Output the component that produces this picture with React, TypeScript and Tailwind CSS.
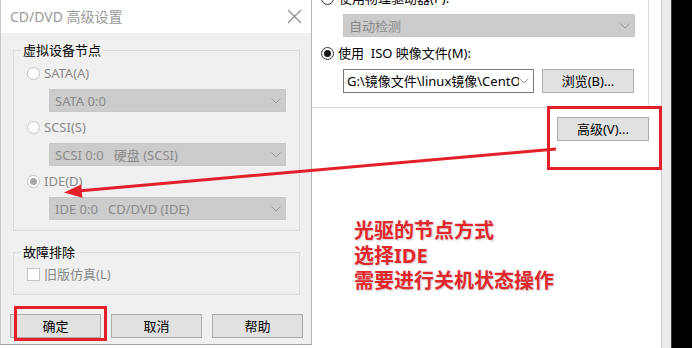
import React from "react";

const Chevron = () => (
  <svg width="10" height="6" viewBox="0 0 10 6" className="shrink-0">
    <polyline points="0.5,0.5 5,5 9.5,0.5" fill="none" stroke="#9a9a9a" strokeWidth="1" />
  </svg>
);

const Radio = ({ checked = false, disabled = false }: { checked?: boolean; disabled?: boolean }) => (
  <span
    className={
      disabled
        ? "w-[13px] h-[13px] shrink-0 rounded-full border border-[#c4c4c4] bg-white flex items-center justify-center"
        : "w-[13px] h-[13px] shrink-0 rounded-full border border-[#333] bg-white flex items-center justify-center"
    }
  >
    {checked && (
      <span className={disabled ? "w-[7px] h-[7px] rounded-full bg-[#a8a8a8]" : "w-[7px] h-[7px] rounded-full bg-[#1a1a1a]"} />
    )}
  </span>
);

const DisabledSelect = ({ text, className = "" }: { text: string; className?: string }) => (
  <div className={"h-[23px] bg-[#cccccc] border border-[#c8c8c8] flex items-center justify-between pl-[5px] pr-[4px] text-[#8a8a8a] whitespace-pre " + className}>
    <span>{text}</span>
    <Chevron />
  </div>
);

const WinButton = ({ label, className = "" }: { label: string; className?: string }) => (
  <div className={"h-[24px] bg-[#e1e1e1] border border-[#adadad] flex items-center justify-center text-black " + className}>
    {label}
  </div>
);

export default function App() {
  return (
    <div className="relative w-[692px] h-[348px] overflow-hidden flex bg-black text-[13px] leading-[16px] [font-family:'Noto_Sans','Noto_Sans_CJK_SC',sans-serif]">
      {/* CD/DVD 高级设置 dialog */}
      <div className="w-[312px] shrink-0 bg-white flex flex-col">
        <div className="h-[345px] bg-[#f0f0f0] border-l border-r border-b border-l-[#c8c8c8] border-r-[#b4b4b4] border-b-[#a8a8a8] flex flex-col">
          <div className="h-[33px] shrink-0 bg-white flex items-center justify-between pl-[9px] pr-[9px]">
            <span className="text-[14px] text-[#9a9a9a]">CD/DVD 高级设置</span>
            <svg width="15" height="15" viewBox="0 0 15 15">
              <path d="M1 1 L14 14 M14 1 L1 14" stroke="#8c8c8c" strokeWidth="1.1" />
            </svg>
          </div>

          <fieldset className="ml-[12px] mt-[9px] w-[287px] border border-[#dcdcdc] pl-[13px] pr-[13px] pt-[7px] pb-[10px]">
            <legend className="-ml-[6px] px-[2px] text-black">虚拟设备节点</legend>
            <div className="flex items-center gap-[4px] h-[16px] text-[#8a8a8a]">
              <Radio disabled />
              <span>SATA(A)</span>
            </div>
            <DisabledSelect text="SATA 0:0" className="ml-[22px] mt-[8px]" />
            <div className="flex items-center gap-[4px] h-[16px] mt-[7px] text-[#8a8a8a]">
              <Radio disabled />
              <span>SCSI(S)</span>
            </div>
            <DisabledSelect text="SCSI 0:0   硬盘 (SCSI)" className="ml-[22px] mt-[8px]" />
            <div className="flex items-center gap-[4px] h-[16px] mt-[7px] text-[#8a8a8a]">
              <Radio disabled checked />
              <span>IDE(D)</span>
            </div>
            <DisabledSelect text="IDE 0:0   CD/DVD (IDE)" className="ml-[22px] mt-[8px]" />
          </fieldset>

          <fieldset className="ml-[12px] mt-[13px] w-[287px] border border-[#dcdcdc] pl-[13px] pr-[13px] pt-[6px] pb-[12px]">
            <legend className="-ml-[6px] px-[2px] text-black">故障排除</legend>
            <div className="flex items-center gap-[4px] h-[16px] text-[#8a8a8a]">
              <span className="w-[13px] h-[13px] border border-[#c4c4c4] bg-white" />
              <span>旧版仿真(L)</span>
            </div>
          </fieldset>

          <div className="flex gap-[10px] pl-[9px] mt-[19px]">
            <WinButton label="确定" className="w-[91px]" />
            <WinButton label="取消" className="w-[91px]" />
            <WinButton label="帮助" className="w-[91px]" />
          </div>
        </div>
      </div>

      {/* main settings window behind */}
      <div className="w-[349px] shrink-0 bg-white flex flex-col">
        <div className="w-[337px] h-[108px] border-r border-b border-[#dcdcdc] flex flex-col">
          <div className="flex items-center gap-[5px] h-[16px] -mt-[10px] pl-[9px] text-black">
            <Radio />
            <span>使用物理驱动器(P):</span>
          </div>
          <DisabledSelect text="自动检测" className="ml-[31px] mt-[8px] w-[292px]" />
          <div className="flex items-center gap-[4px] h-[16px] mt-[8px] pl-[9px] text-black">
            <Radio checked />
            <span className="whitespace-pre">使用  ISO 映像文件(M):</span>
          </div>
          <div className="flex items-center mt-[8px] ml-[31px]">
            <div className="w-[191px] h-[24px] bg-white border border-[#7a7a7a] flex items-center justify-between pl-[3px] pr-[4px] overflow-hidden">
              <span className="whitespace-nowrap overflow-hidden w-[172px]">G:\镜像文件\linux镜像\CentOS</span>
              <Chevron />
            </div>
            <WinButton label="浏览(B)..." className="w-[92px] ml-[8px]" />
          </div>
        </div>
        <div className="flex justify-end pr-[12px] mt-[9px]">
          <WinButton label="高级(V)..." className="w-[92px]" />
        </div>
        <div className="ml-[42px] mt-[77px] text-[20px] leading-[25px] font-bold text-[#e3262c] [text-shadow:1px_1px_2px_#c8c8c8]">
          <div>光驱的节点方式</div>
          <div>选择IDE</div>
          <div>需要进行关机状态操作</div>
        </div>
      </div>

      {/* window edge strip */}
      <div className="w-[11px] shrink-0 bg-[#ececec] border-l border-r border-l-[#d0d0d0] border-r-[#3a3a3a]" />
      <div className="flex-1 bg-black" />

      {/* annotations */}
      <svg className="absolute left-0 top-0 pointer-events-none" width="692" height="348" viewBox="0 0 692 348">
        <rect x="548.5" y="107.5" width="112" height="61" fill="none" stroke="#e3202a" strokeWidth="3" />
        <rect x="15.5" y="307.5" width="90" height="32" fill="none" stroke="#e3202a" strokeWidth="3" />
        <line x1="556" y1="149" x2="78" y2="191" stroke="#e3202a" strokeWidth="3" />
        <polygon points="64,192.5 82.4,197.8 81.2,184.6" fill="#e3202a" />
      </svg>
    </div>
  );
}
